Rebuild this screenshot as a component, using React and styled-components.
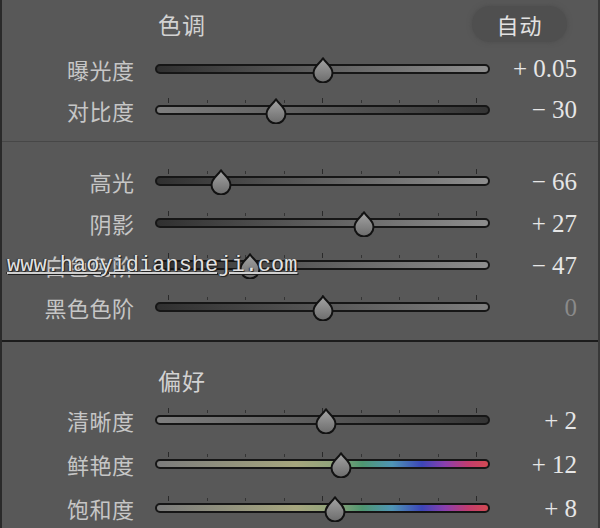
import React from 'react'
import styled, { createGlobalStyle } from 'styled-components'

const GlobalStyle = createGlobalStyle`
  html, body {
    margin: 0;
    padding: 0;
    background: #585858;
  }
`

const DARK_LIGHT = 'linear-gradient(to right, #303030, #8e8e8e)'
const LIGHT_DARK = 'linear-gradient(to right, #7e7e7e, #343434)'
const COLOR =
  'linear-gradient(to right, #7c7c7c 0%, #a6a67e 42%, #8fa47a 54%, #4e9670 62%, #4f95b5 71%, #3c46b8 80%, #8a3fae 87%, #c23c6e 94%, #d24a52 100%)'

const sections = [
  {
    title: '色调',
    auto: true,
    rowHeight: 41,
    rows: [
      { label: '曝光度', value: '+ 0.05', pos: 0.5, fill: DARK_LIGHT, ticks: false },
      { label: '对比度', value: '− 30', pos: -30, fill: LIGHT_DARK },
    ],
  },
  {
    rowHeight: 42,
    rows: [
      { label: '高光', value: '− 66', pos: -66, fill: DARK_LIGHT },
      { label: '阴影', value: '+ 27', pos: 27, fill: DARK_LIGHT },
      { label: '白色色阶', value: '− 47', pos: -47, fill: DARK_LIGHT },
      { label: '黑色色阶', value: '0', pos: 0, fill: 'linear-gradient(to right, #303030, #7e7e7e)', dim: true },
    ],
  },
  {
    title: '偏好',
    rowHeight: 44,
    rows: [
      { label: '清晰度', value: '+ 2', pos: 2, fill: LIGHT_DARK },
      { label: '鲜艳度', value: '+ 12', pos: 12, fill: COLOR },
      { label: '饱和度', value: '+ 8', pos: 8, fill: COLOR },
    ],
  },
]

const Thumb = ({ x }) => (
  <ThumbWrap style={{ left: x - 11 }}>
    <svg width="22" height="26" viewBox="0 0 22 26">
      <defs>
        <linearGradient id="thumbFill" x1="0" y1="0" x2="0" y2="1">
          <stop offset="0" stopColor="#a4a4a4" />
          <stop offset="1" stopColor="#6c6c6c" />
        </linearGradient>
      </defs>
      <path
        d="M11 1.2 C13 5.5 20.5 9 20.5 16 A9.5 9.5 0 0 1 1.5 16 C1.5 9 9 5.5 11 1.2 Z"
        fill="url(#thumbFill)"
        stroke="#121212"
        strokeWidth="2"
        strokeLinejoin="round"
      />
    </svg>
  </ThumbWrap>
)

const SliderRow = ({ row, height }) => {
  // thumb travel: 13px inset on a 335px rail
  const x = 13 + ((row.pos + 100) / 200) * 309
  return (
    <Row $h={height}>
      <Label>{row.label}</Label>
      <Track>
        {row.ticks !== false && (
          <Ticks>
            {Array.from({ length: 9 }).map((_, i) => (
              <Tick key={i} $major={i === 0 || i === 4 || i === 8} />
            ))}
          </Ticks>
        )}
        <Rail $fill={row.fill} />
        <Thumb x={x} />
      </Track>
      <Value $dim={row.dim}>{row.value}</Value>
    </Row>
  )
}

export default function App() {
  return (
    <>
      <GlobalStyle />
      <Panel>
        {sections.map((s, i) => (
          <Section key={i} $variant={i}>
            {s.title && (
              <Header $first={i === 0}>
                <Title>{s.title}</Title>
                {s.auto && <AutoButton>自动</AutoButton>}
              </Header>
            )}
            {s.rows.map((r) => (
              <SliderRow key={r.label} row={r} height={s.rowHeight} />
            ))}
          </Section>
        ))}
        <Watermark>www.haoyidiansheji.com</Watermark>
      </Panel>
    </>
  )
}

const Panel = styled.div`
  position: relative;
  width: 596px;
  height: 528px;
  overflow: hidden;
  background: #585858;
  border-left: 2px solid #2a2a2a;
  border-right: 2px solid #383838;
  font-family: 'Noto Sans CJK SC', 'Noto Sans', sans-serif;
`

const Section = styled.section`
  box-sizing: border-box;
  ${({ $variant }) =>
    $variant === 0
      ? `height: 142px; border-bottom: 1px solid #474747;`
      : $variant === 1
      ? `height: 200px; padding-top: 18px; border-bottom: 2px solid #1c1c1c;`
      : `padding-top: 20px;`}
`

const Header = styled.div`
  height: ${({ $first }) => ($first ? 48 : 36)}px;
  display: flex;
  align-items: center;
  justify-content: space-between;
  padding-left: 156px;
  padding-right: 31px;
`

const Title = styled.div`
  font-size: 23px;
  color: #d2d2d2;
  letter-spacing: 1px;
`

const AutoButton = styled.div`
  width: 95px;
  height: 36px;
  border-radius: 18px;
  background: #4f4f4f;
  box-shadow: 0 0 4px 1px #505050;
  display: flex;
  align-items: center;
  justify-content: center;
  font-size: 22px;
  color: #e2e2e2;
  letter-spacing: 1px;
`

const Row = styled.div`
  height: ${({ $h }) => $h}px;
  display: grid;
  grid-template-columns: 132px 335px 66px;
  column-gap: 21px;
  align-items: center;
`

const Label = styled.div`
  text-align: right;
  font-size: 22px;
  color: #c6c6c6;
  line-height: 1;
  letter-spacing: 0.5px;
  margin-right: -0.5px;
`

const Track = styled.div`
  position: relative;
  height: 100%;
  display: flex;
  align-items: center;
`

const Rail = styled.div`
  box-sizing: border-box;
  width: 100%;
  height: 10px;
  border-radius: 5px;
  border: 2px solid #161616;
  background: ${({ $fill }) => $fill};
`

const Ticks = styled.div`
  position: absolute;
  left: 13px;
  right: 13px;
  top: 50%;
  margin-top: -12px;
  height: 5px;
  display: flex;
  justify-content: space-between;
  align-items: flex-end;
`

const Tick = styled.span`
  width: 1px;
  height: ${({ $major }) => ($major ? 5 : 3)}px;
  background: ${({ $major }) => ($major ? '#2a2a2a' : '#343434')};
`

const ThumbWrap = styled.div`
  position: absolute;
  top: 50%;
  margin-top: -12px;
  width: 22px;
  height: 26px;
  svg {
    display: block;
  }
`

const Value = styled.div`
  text-align: right;
  font-family: 'Liberation Serif', 'Times New Roman', serif;
  font-size: 25px;
  line-height: 1;
  color: ${({ $dim }) => ($dim ? '#8a8a8a' : '#e6e6e6')};
  white-space: pre;
`

const Watermark = styled.div`
  position: absolute;
  left: 5px;
  top: 255px;
  font-family: 'Liberation Mono', 'Courier New', monospace;
  font-size: 22px;
  line-height: 22px;
  color: rgba(245, 245, 245, 0.92);
  text-decoration: underline;
  text-decoration-color: #d0d0d0;
  text-underline-offset: 1px;
  text-shadow: 1px 1px 1px #1e1e1e, -1px 0 1px #2e2e2e;
  white-space: nowrap;
`
